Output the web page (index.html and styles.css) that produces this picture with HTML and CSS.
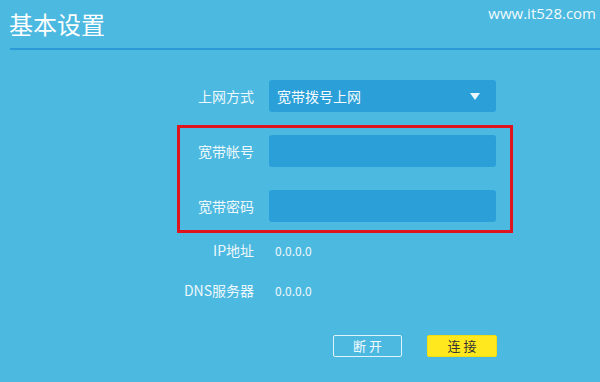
FILE: index.html
```
<!DOCTYPE html>
<html lang="zh-CN">
<head>
<meta charset="utf-8">
<link rel="stylesheet" href="styles.css">
</head>
<body>
<div class="page">
  <header class="header">
    <h1 class="title">基本设置</h1>
    <span class="watermark">www.it528.com</span>
  </header>
  <form class="form">
    <div class="row">
      <label class="label">上网方式</label>
      <div class="select">
        <span>宽带拨号上网</span>
        <svg class="caret" width="10" height="7" viewBox="0 0 10 7"><polygon points="0,0 10,0 5,7" fill="#eaf6fb"/></svg>
      </div>
    </div>
    <div class="highlight">
      <div class="row">
        <label class="label">宽带帐号</label>
        <div class="input"></div>
      </div>
      <div class="row">
        <label class="label">宽带密码</label>
        <div class="input"></div>
      </div>
    </div>
    <div class="row info">
      <span class="label">IP地址</span>
      <span class="value">0.0.0.0</span>
    </div>
    <div class="row info dns">
      <span class="label">DNS服务器</span>
      <span class="value">0.0.0.0</span>
    </div>
    <div class="actions">
      <button type="button" class="btn btn-outline">断 开</button>
      <button type="button" class="btn btn-primary">连 接</button>
    </div>
  </form>
</div>
</body>
</html>
```
FILE: styles.css
```
* { box-sizing: border-box; }
html, body {
  margin: 0;
  padding: 0;
  width: 600px;
  height: 382px;
  overflow: hidden;
  background: #4bb9e0;
  font-family: "Noto Sans CJK SC", "Noto Sans", sans-serif;
  color: #eef8fc;
}
.page { width: 600px; height: 382px; }
.header {
  margin-left: 10px;
  height: 50px;
  border-bottom: 2px solid #2b9ad6;
  display: flex;
  justify-content: space-between;
  align-items: flex-start;
}
.title {
  margin: 10px 0 0 -1px;
  font-size: 24px;
  line-height: 28px;
  font-weight: normal;
  color: #ffffff;
}
.watermark {
  margin: 3px 4px 0 0;
  font-family: "Open Sans", "Noto Sans", sans-serif;
  font-size: 15px;
  line-height: 20px;
  color: #f2fafd;
}
.form {
  margin: 30px 0 0 177px;
  width: 336px;
  display: flex;
  flex-direction: column;
}
.row {
  display: grid;
  grid-template-columns: 74px 227px;
  column-gap: 15px;
  align-items: center;
  height: 32px;
  padding-left: 3px;
  font-size: 14px;
}
.label {
  text-align: right;
  white-space: nowrap;
  color: #eef8fc;
}
.select, .input {
  height: 32px;
  background: #2ba0d8;
  border-radius: 3px;
}
.select {
  display: flex;
  align-items: center;
  justify-content: space-between;
  padding: 0 16px 0 8px;
  color: #f4fbfe;
}
.caret { display: block; }
.highlight {
  margin-top: 13px;
  border: 3px solid #e0141e;
  padding: 7px 0 8px 0;
  display: flex;
  flex-direction: column;
  gap: 23px;
}
.highlight .row { padding-left: 0; }
.info { margin-top: 1px; }
.info.dns { margin-top: 8px; }
.value {
  padding-left: 6px;
  font-size: 12px;
  color: #eef8fc;
}
.actions {
  margin-top: 29px;
  padding-left: 156px;
  display: flex;
  gap: 25px;
}
.btn {
  height: 22px;
  width: 69px;
  font-family: "Noto Sans CJK SC", sans-serif;
  font-size: 13px;
  line-height: 20px;
  padding: 0;
  border-radius: 2px;
  cursor: pointer;
}
.btn-outline {
  background: transparent;
  border: 1px solid #dff3fb;
  color: #f4fbfe;
}
.btn-primary {
  width: 70px;
  background: #ffe91e;
  border: 1px solid #f3dc10;
  color: #333333;
}
```
